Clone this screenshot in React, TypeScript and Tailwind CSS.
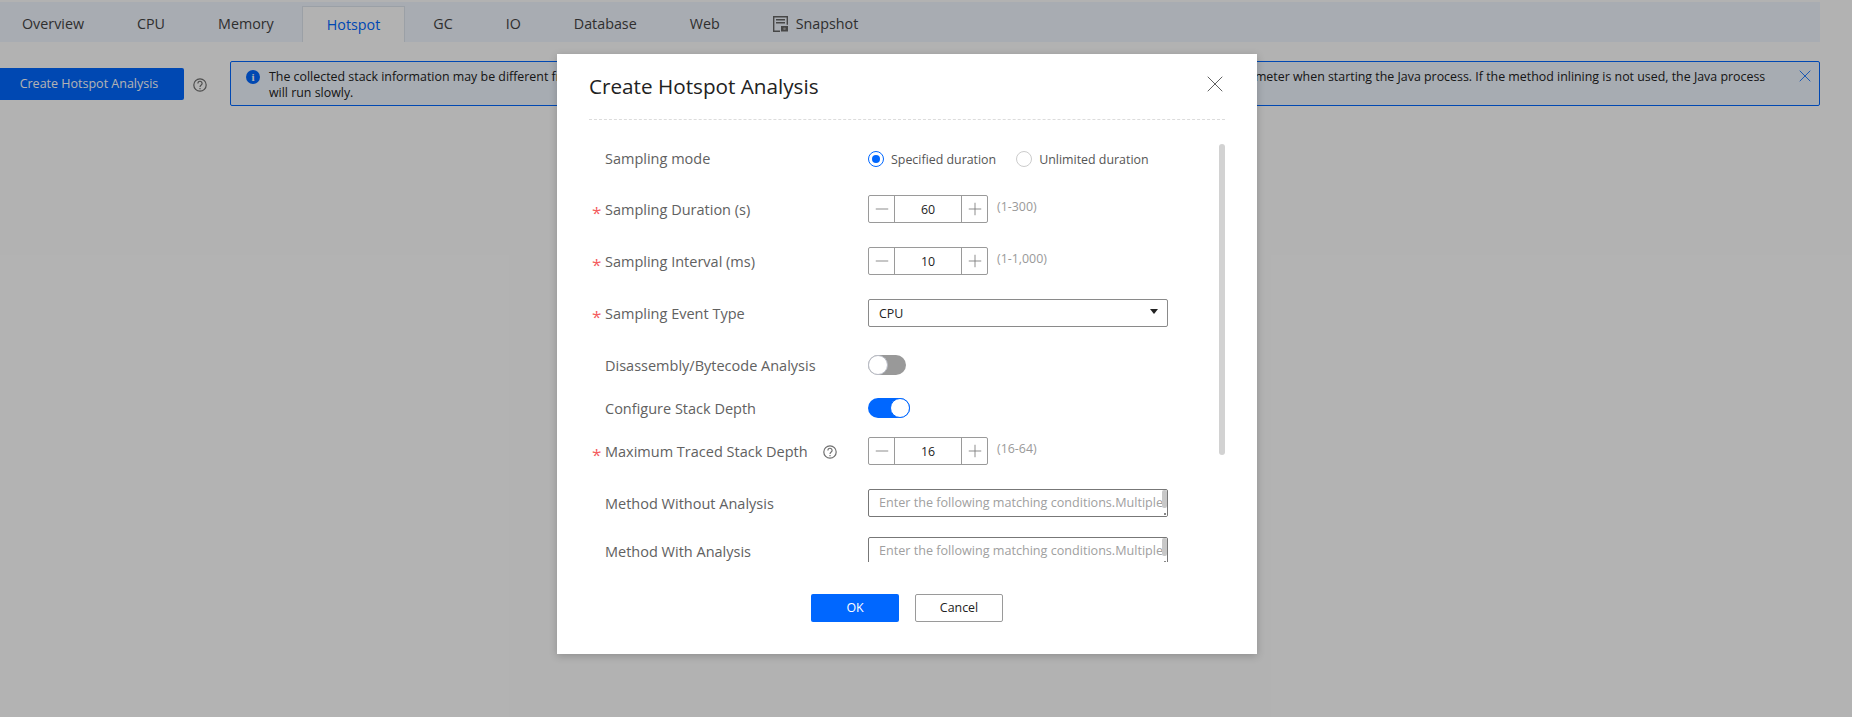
import { Minus, Plus, X } from "lucide-react";

const TABS = ["Overview", "CPU", "Memory", "Hotspot", "GC", "IO", "Database", "Web"];

function HelpIcon() {
  return (
    <svg width="14" height="14" viewBox="0 0 14 14" fill="none" stroke="#6f6f6f" strokeWidth="1.2">
      <circle cx="7" cy="7" r="6.2" />
      <path d="M4.9 5.4a2.1 2.1 0 1 1 3.3 1.7C7.4 7.7 7 8 7 9" />
      <path d="M7 10v1.2" />
    </svg>
  );
}

function SnapshotIcon() {
  return (
    <svg width="18" height="18" viewBox="0 0 18 18" fill="none" stroke="#666" strokeWidth="1.4" className="shrink-0">
      <path d="M8 16.3H1.7V1.7h13.6v8" />
      <path d="M4 4.7h9M4 7.7h9" />
      <rect x="9" y="11" width="7" height="5.5" fill="#666" stroke="none" />
      <circle cx="12.5" cy="13.7" r="1.3" fill="#aaa" stroke="none" />
    </svg>
  );
}

function Star() {
  return <span className="absolute left-[-13px] top-[3px] text-[17px] leading-5 text-[#f45c5e]">*</span>;
}

function Spinner({ value, hint }: { value: string; hint: string }) {
  return (
    <div className="flex items-center">
      <div className="flex h-7 w-[120px] items-center rounded-[2px] border border-[#9a9a9a] text-[#777]">
        <span className="flex h-full w-[26px] items-center justify-center border-r border-[#9a9a9a]">
          <Minus size={20} strokeWidth={1} />
        </span>
        <span className="flex-1 translate-y-[1px] text-center text-[12.4px] text-[#222]">{value}</span>
        <span className="flex h-full w-[26px] items-center justify-center border-l border-[#9a9a9a]">
          <Plus size={20} strokeWidth={1} />
        </span>
      </div>
      <span className="ml-[9px] -translate-y-[2px] text-[12.4px] text-[#999]">{hint}</span>
    </div>
  );
}

function Row({ label, required, help, className, children }: { label: string; required?: boolean; help?: boolean; className: string; children: React.ReactNode }) {
  return (
    <div className={`flex items-center ${className}`}>
      <div className="relative flex h-5 w-[263px] shrink-0 translate-y-[1px] items-center text-[14.5px] leading-5 text-[#616161]">
        {required && <Star />}
        {label}
        {help && (
          <span className="ml-[15px] flex">
            <HelpIcon />
          </span>
        )}
      </div>
      {children}
    </div>
  );
}

function TextArea() {
  return (
    <div className="relative h-7 w-[300px] shrink-0 overflow-hidden rounded-[2px] border border-[#777] pl-[10px] text-[12.6px] leading-[26px] whitespace-nowrap text-[#a0a0a0]">
      Enter the following matching conditions.Multiple
      <span className="absolute right-0 top-0 h-[18px] w-[5px] rounded-[2px] bg-[#c8c8c8]" />
      <span className="absolute right-0 bottom-0 flex h-[7px] w-[7px] items-end justify-end bg-white p-px">
        <span className="h-[2px] w-[2px] bg-[#888]" />
      </span>
    </div>
  );
}

export default function App() {
  return (
    <div className="relative h-[717px] w-full overflow-hidden bg-white font-['Open_Sans',sans-serif]">
      <div className="mt-[2px] mr-[32px] flex h-10 items-end bg-[#f1f6ff] text-[14.3px] text-[#444]">
        <div className="-ml-[3px] flex h-9 gap-[3px]">
          {TABS.map((t) => (
            <div
              key={t}
              className={
                t === "Hotspot"
                  ? "flex items-center border border-b-0 border-[#dfe5ee] bg-white px-6 text-[#0067ff]"
                  : "flex items-center border border-transparent px-6"
              }
            >
              {t}
            </div>
          ))}
          <div className="flex items-center gap-[6px] px-6">
            <SnapshotIcon />
            Snapshot
          </div>
        </div>
      </div>

      <div className="mt-[19px] mr-[32px] flex items-start">
        <button type="button" className="mt-[7px] h-8 w-[184px] rounded-r-[2px] bg-[#0067ff] pr-[6px] text-[12.5px] text-white">
          Create Hotspot Analysis
        </button>
        <span className="mt-[17px] ml-[9px] flex">
          <HelpIcon />
        </span>
        <div className="relative ml-[23px] h-[45px] flex-1 rounded-[2px] border border-[#0067ff] bg-[#f0f6ff] pt-[7px] pl-[38px] text-[12.4px] leading-4 text-[#222]">
          <span className="absolute left-[15px] top-[8px] flex h-[14px] w-[14px] items-center justify-center rounded-full bg-[#0067ff] font-['Liberation_Serif',serif] text-[11px] font-bold text-white">
            i
          </span>
          <span className="whitespace-nowrap">
            The collected stack information may be different from the actual stack information because of this method inlining. To disable this method inlining, add this -XX:-Inline parameter when starting the Java process. If the method inlining is not used, the Java process
          </span>
          <br />
          will run slowly.
          <X size={20} strokeWidth={1} className="absolute right-[4px] top-[4px] text-[#0067ff]" />
        </div>
      </div>

      <div className="absolute inset-0 bg-black/30" />

      <div className="absolute left-[557px] top-[54px] flex h-[600px] w-[700px] flex-col bg-white px-8 shadow-[0_2px_8px_rgba(0,0,0,0.2)]">
        <div className="flex h-[66px] items-center justify-between border-b border-dashed border-[#dcdcdc]">
          <span className="text-[20.7px] text-[#222]">Create Hotspot Analysis</span>
          <X size={28} strokeWidth={0.8} className="-mr-[4px] mb-[6px] text-[#555]" />
        </div>

        <div className="mt-[23px] flex h-[419px] items-start justify-between">
          <div className="h-full flex-1 overflow-hidden pl-4">
            <Row label="Sampling mode" className="mt-[3px] h-6">
              <div className="flex translate-y-[1px] items-center text-[12.4px] text-[#555]">
                <span className="flex h-4 w-4 items-center justify-center rounded-full border border-[#0067ff]">
                  <span className="h-2 w-2 rounded-full bg-[#0067ff]" />
                </span>
                <span className="ml-[7px] translate-y-[1px]">Specified duration</span>
                <span className="ml-5 h-4 w-4 rounded-full border border-[#ccc]" />
                <span className="ml-[7px] translate-y-[1px]">Unlimited duration</span>
              </div>
            </Row>
            <Row label="Sampling Duration (s)" required className="mt-[25px]">
              <Spinner value="60" hint="(1-300)" />
            </Row>
            <Row label="Sampling Interval (ms)" required className="mt-6">
              <Spinner value="10" hint="(1-1,000)" />
            </Row>
            <Row label="Sampling Event Type" required className="mt-6">
              <div className="relative flex h-7 w-[300px] items-center rounded-[2px] border border-[#8a8a8a] pt-[2px] pl-[10px] text-[12.4px] text-[#222]">
                CPU
                <span className="absolute right-[9px] top-[9px] h-0 w-0 border-x-[4px] border-t-[5px] border-x-transparent border-t-[#222]" />
              </div>
            </Row>
            <Row label="Disassembly/Bytecode Analysis" className="mt-7">
              <div className="flex h-5 w-[38px] items-center rounded-full bg-[#999]">
                <span className="h-5 w-5 rounded-full border border-[#b9bcc6] bg-white" />
              </div>
            </Row>
            <Row label="Configure Stack Depth" className="mt-[23px]">
              <div className="flex h-5 w-[42px] items-center justify-end rounded-full bg-[#0067ff]">
                <span className="h-5 w-5 rounded-full border border-[#0067ff] bg-white" />
              </div>
            </Row>
            <Row label="Maximum Traced Stack Depth" required help className="mt-[19px]">
              <Spinner value="16" hint="(16-64)" />
            </Row>
            <Row label="Method Without Analysis" className="mt-6">
              <TextArea />
            </Row>
            <Row label="Method With Analysis" className="mt-5">
              <TextArea />
            </Row>
          </div>
          <div className="mt-px h-[311px] w-[6px] rounded-[3px] bg-[#d2d2d2]" />
        </div>

        <div className="mt-[32px] flex justify-center gap-4 text-[12.4px]">
          <button type="button" className="h-7 w-[88px] rounded-[2px] bg-[#0067ff] text-white">
            OK
          </button>
          <button type="button" className="h-7 w-[88px] rounded-[2px] border border-[#9a9a9a] bg-white text-[#222]">
            Cancel
          </button>
        </div>
      </div>
    </div>
  );
}
